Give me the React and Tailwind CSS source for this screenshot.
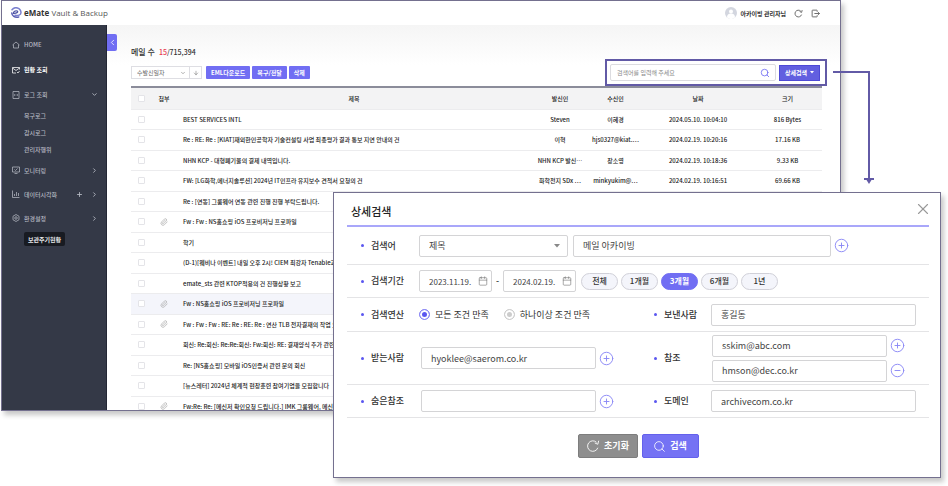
import React from "react";
import {
  ChevronDown,
  ChevronRight,
  ChevronLeft,
  ArrowDown,
  Plus,
  Search,
  Paperclip,
  Calendar,
  CirclePlus,
  CircleMinus,
  X,
} from "lucide-react";

const MAILS = [
  { subject: "BEST SERVICES INTL", from: "Steven", to: "이혜경", date: "2024.05.10. 10:04:10", size: "816 Bytes" },
  { subject: "Re : RE: Re : [KIAT]재외한인공학자 기술컨설팅 사업 최종평가 결과 통보 지연 안내의 건", from: "이혁", to: "hjs0327@kiat.⋯", date: "2024.02.19. 10:20:16", size: "17.16 KB" },
  { subject: "NHN KCP - 대형폐기물의 결제 내역입니다.", from: "NHN KCP 발신⋯", to: "장소영", date: "2024.02.19. 10:18:36", size: "9.33 KB" },
  { subject: "FW: [LG화학,에너지솔루션] 2024년 IT인프라 유지보수 견적서 요청의 건", from: "화학전지 SDx ⋯", to: "minkyukim@⋯", date: "2024.02.19. 10:16:51", size: "69.66 KB" },
  { subject: "Re : [연동] 그룹웨어 연동 관련 진행 진행 부탁드립니다." },
  { subject: "Fw : Fw : NS홈쇼핑 iOS 프로비저닝 프로파일", clip: true },
  { subject: "학기" },
  { subject: "(D-1)[웨비나 이벤트] 내일 오후 2시! CIEM 최강자 Tenable과 함께" },
  { subject: "emate_sts 관련 KTOP적용의 건 진행상황 보고" },
  { subject: "Fw : NS홈쇼핑 iOS 프로비저닝 프로파일", clip: true, active: true },
  { subject: "Fw : Fw : Fw : RE: Re : RE: Re : 연산 TLB 전자결재의 작업 요청", clip: true },
  { subject: "회신: Re:회신: Re:Re:회신: Fw:회신: RE: 결재양식 추가 관련" },
  { subject: "Re: [NS홈쇼핑] 모바일 iOS인증서 관련 문의 회신" },
  { subject: "[뉴스레터] 2024년 체계적 현장훈련 참여기업을 모집합니다" },
  { subject: "Fw:Re: Re: [메신저 확인요청 드립니다.] IMK 그룹웨어, 메신저", clip: true },
];

const PERIODS = [
  { label: "전체" },
  { label: "1개월" },
  { label: "3개월", active: true },
  { label: "6개월" },
  { label: "1년" },
];

const FIELD =
  "h-[22px] rounded-[2px] border border-[#d4d4d6] bg-white px-[9px] leading-none text-[#444] outline-none";

const ICONS = {
  home: "M1 8L8 2L15 8M3 7V14H13V7",
  mail: "M15 7V3H1V14H8M1 4L8 9L15 4M10 12L12 14L15 10",
  log: "M2 1H14V15H2ZM6.5 6L4.500 8L6.500 10M9.500 6L11.500 8L9.500 10",
  monitor: "M1 2H15V12H1ZM5 15H11M5 7L7 9L11 5",
  chart: "M1 1V15H15M5 12V8M9 12V4M13 12V6",
  gear: "M8 1L14 4.500V11.500L8 15L2 11.500V4.500ZM8 5.500A2.500 2.500 0 1 0 8 10.500A2.500 2.500 0 1 0 8 5.500",
  refresh: "M13.500 10A6 6 0 1 1 12 3.800M14.500 2L13.500 6L10 4.500",
  logout: "M11 5V3Q11 2 10 2H3Q2 2 2 3V13Q2 14 3 14H10Q11 14 11 13V11M6 8H15M12.500 5.500L15 8L12.500 10.500",
};

function Glyph({ name, className, weight = 1.5 }) {
  return (
    <svg viewBox="0 0 16 16" className={className} fill="none" stroke="currentColor" strokeWidth={weight}>
      <path d={ICONS[name]} />
    </svg>
  );
}

function Logo() {
  return (
    <svg viewBox="0 0 24 24" className="size-[12px]" fill="none" strokeLinecap="round">
      <path d="M4 5.500A10 10 0 0 1 22 11C22 16 16 18 10 16.500" stroke="#7b80cf" strokeWidth="3" />
      <path d="M6.500 13C6.500 9 11 6.500 14.500 8C17 9.500 14 12.500 8 12.500" stroke="#4f55a4" strokeWidth="2.500" />
      <path d="M3.500 12C4 18 9 21.500 17.500 20" stroke="#5a5fb5" strokeWidth="3" />
    </svg>
  );
}

function NavItem({ icon, label, strong, tall, plus, arrow: Arrow }) {
  return (
    <li>
      <a
        href="#"
        className={`flex items-center gap-1 pl-[10px] pr-[8px] ${tall ? "h-[25px]" : "h-[24px]"} ${
          strong ? "font-bold text-white" : "font-medium text-[#b4b8c1]"
        }`}
      >
        <Glyph name={icon} className="size-[8px]" />
        <span className="flex-1">{label}</span>
        {plus && <Plus className="mr-1 size-[7px]" strokeWidth={3} />}
        {Arrow && <Arrow className="size-[7px]" strokeWidth={3} />}
      </a>
    </li>
  );
}

function Sidebar() {
  return (
    <nav className="w-[105px] shrink-0 border-r border-[#232735] bg-[#343947] pt-[7px] text-[6px]">
      <ul>
        <NavItem tall icon="home" label="HOME" />
        <NavItem tall strong icon="mail" label="현황 조회" />
        <NavItem tall icon="log" label="로그 조회" arrow={ChevronDown} />
        {["복구로그", "감시로그", "관리자행위"].map((t) => (
          <li key={t}>
            <a href="#" className="flex h-[17px] items-center pl-[22px] font-medium text-[#b4b8c1]">
              {t}
            </a>
          </li>
        ))}
        <NavItem icon="monitor" label="모니터링" arrow={ChevronRight} />
        <NavItem icon="chart" label="데이터시각화" plus arrow={ChevronRight} />
        <NavItem icon="gear" label="환경설정" arrow={ChevronRight} />
      </ul>
      <button className="ml-[22px] mt-[2px] h-[14px] rounded-[2px] bg-[#181b22] px-1 font-bold text-[#e6e7ea]">
        보관주기현황
      </button>
    </nav>
  );
}

function Check({ label }) {
  return (
    <input
      type="checkbox"
      aria-label={label}
      className="mx-auto block size-[7px] appearance-none rounded-[1px] border border-[#e4e4e8] bg-white"
    />
  );
}

function Toolbar() {
  const action = "h-[13px] rounded-[1px] bg-[#716ef3] px-[5px] font-bold text-white";
  return (
    <div className="-mr-[5px] flex items-center justify-between text-[6px]">
      <div className="flex items-center gap-[2px]">
        <div className="mr-[2px] flex h-[13px] border border-[#dedee3] bg-white text-[#666]">
          <div className="relative">
            <select aria-label="정렬 기준" className="h-full w-[57px] appearance-none bg-transparent pl-[5px]">
              <option>수발신일자</option>
            </select>
            <ChevronDown className="pointer-events-none absolute right-[3px] top-[3px] size-[6px]" />
          </div>
          <button aria-label="내림차순" className="flex w-[12px] items-center justify-center border-l border-[#dedee3]">
            <ArrowDown className="size-[6px]" />
          </button>
        </div>
        <button className={action}>EML다운로드</button>
        <button className={action}>복구/전달</button>
        <button className={action}>삭제</button>
      </div>
      <div className="flex h-[27px] w-[222px] items-center gap-[3px] border-2 border-[#625aa6] bg-white pl-[3px] pr-[5px]">
        <div className="flex h-[17px] flex-1 items-center rounded-[2px] border border-[#dcdce0] pl-[6px] pr-[5px]">
          <input
            aria-label="검색어"
            placeholder="검색어를 입력해 주세요"
            className="min-w-0 flex-1 outline-none placeholder:text-[#888]"
          />
          <Search className="size-[10px] text-[#716ef3]" strokeWidth={2} />
        </div>
        <button className="flex h-[16px] w-[41px] items-center justify-center gap-[3px] border border-[#4d49d6] bg-[#625fe0] font-bold text-white">
          상세검색
          <svg viewBox="0 0 4 3" className="h-[3px] w-[4px]">
            <path d="M0 0H4L2 2.500Z" fill="currentColor" />
          </svg>
        </button>
      </div>
    </div>
  );
}

function MailTable() {
  return (
    <table className="h-[331px] w-full table-fixed border-t-2 border-[#8b8c9a] text-center text-[6px] text-[#222]">
      <colgroup>
        <col className="w-[21px]" />
        <col className="w-[24px]" />
        <col />
        <col className="w-[56px]" />
        <col className="w-[55px]" />
        <col className="w-[110px]" />
        <col className="w-[69px]" />
      </colgroup>
      <thead className="bg-[#f3f3f4]">
        <tr className="h-[22px] border-b border-[#ececee]">
          <th><Check label="전체 선택" /></th>
          {["첨부", "제목", "발신인", "수신인", "날짜", "크기"].map((h) => (
            <th key={h} className="font-medium">{h}</th>
          ))}
        </tr>
      </thead>
      <tbody>
        {MAILS.map((m, i) => (
          <tr key={i} className={`h-[20px] border-b border-[#ececee] font-medium ${m.active ? "bg-[#f4f5fb]" : ""}`}>
            <td><Check label={m.subject} /></td>
            <td>{m.clip && <Paperclip className="mx-auto size-[8px] text-[#aaa]" strokeWidth={2} />}</td>
            <td className="overflow-hidden whitespace-nowrap pl-[7px] text-left">{m.subject}</td>
            <td className="whitespace-nowrap">{m.from}</td>
            <td className="whitespace-nowrap">{m.to}</td>
            <td className="whitespace-nowrap">{m.date}</td>
            <td className="whitespace-nowrap">{m.size}</td>
          </tr>
        ))}
      </tbody>
    </table>
  );
}

function Label({ htmlFor, children, className }) {
  return (
    <label
      htmlFor={htmlFor}
      className={`flex shrink-0 items-center gap-[7px] whitespace-nowrap font-medium text-[#333] ${className}`}
    >
      <span className="size-[3px] rounded-full bg-[#5b57f0]" />
      {children}
    </label>
  );
}

function IconButton({ icon: Icon, label }) {
  return (
    <button type="button" aria-label={label} className="ml-[3px] block shrink-0 text-[#8a87f5]">
      <Icon className="size-[15px]" strokeWidth={1.5} />
    </button>
  );
}

function Radio({ id, label, checked }) {
  return (
    <label htmlFor={id} className="flex items-center gap-[5px] whitespace-nowrap text-[#333]">
      <input
        id={id}
        type="radio"
        name="op"
        defaultChecked={checked}
        className="size-[11px] appearance-none rounded-full border border-[#ccc] bg-[#ccc] shadow-[inset_0_0_0_2px_white] checked:border-[#8a87f5] checked:bg-[#5b57f0]"
      />
      {label}
    </label>
  );
}

function DateField({ id, label, value }) {
  return (
    <div className={`flex w-[73px] items-center text-[8px] ${FIELD}`}>
      <input id={id} aria-label={label} defaultValue={value} className="w-0 flex-1 outline-none" />
      <Calendar className="-mr-[6px] size-[10px] shrink-0 text-[#777]" strokeWidth={1.5} />
    </div>
  );
}

function SearchDialog() {
  const row = "flex items-center border-b border-[#e4e4e6] pl-[14px]";
  const left = "flex w-[293px] shrink-0 items-center";
  const right = "flex flex-1 items-center";
  return (
    <section
      role="dialog"
      aria-label="상세검색"
      className="absolute left-[333px] right-[7px] top-[192px] border border-[#74708f] bg-white pb-[19px] pl-[13px] pr-[11px] text-[9px] shadow-[3px_4px_5px_rgba(0,0,0,0.22)]"
    >
      <header className="flex h-[34px] items-center justify-between border-b-2 border-[#a9a7fa] pl-1">
        <h2 className="pt-[5px] text-[11px] font-medium text-[#222]">상세검색</h2>
        <button aria-label="닫기" className="-mr-[3px] text-[#999]">
          <X className="size-[18px]" strokeWidth={1.5} />
        </button>
      </header>
      <form>
        <div className={`h-[38px] ${row}`}>
          <Label htmlFor="kw" className="w-[58px]">검색어</Label>
          <div className="relative mr-[5px]">
            <select id="kw" className={`w-[149px] appearance-none ${FIELD}`}>
              <option>제목</option>
            </select>
            <svg viewBox="0 0 6 4" className="pointer-events-none absolute right-[8px] top-[9px] h-[4px] w-[6px]">
              <path d="M0 0H6L3 3.500Z" fill="#888" />
            </svg>
          </div>
          <input aria-label="검색어 입력" defaultValue="메일 아카이빙" className={`min-w-0 flex-1 ${FIELD}`} />
          <div className="mr-[80px]">
            <IconButton icon={CirclePlus} label="검색어 추가" />
          </div>
        </div>
        <div className={`h-[33px] ${row}`}>
          <Label htmlFor="from" className="w-[58px]">검색기간</Label>
          <DateField id="from" label="검색기간 시작" value="2023.11.19." />
          <span className="w-[11px] text-center">-</span>
          <DateField id="to" label="검색기간 끝" value="2024.02.19." />
          <div className="ml-[5px] flex gap-[3px]">
            {PERIODS.map((p) => (
              <button
                key={p.label}
                type="button"
                className={`h-[17px] w-[37px] rounded-full border text-[8px] ${
                  p.active
                    ? "border-[#716ef3] bg-[#716ef3] font-bold text-white"
                    : "border-[#d0d0d8] bg-[#f4f5fb] font-medium text-[#333]"
                }`}
              >
                {p.label}
              </button>
            ))}
          </div>
        </div>
        <div className={`h-[34px] ${row}`}>
          <div className={left}>
            <Label htmlFor="op-all" className="w-[58px]">검색연산</Label>
            <div className="flex gap-[15px]">
              <Radio id="op-all" label="모든 조건 만족" checked />
              <Radio id="op-any" label="하나이상 조건 만족" />
            </div>
          </div>
          <div className={right}>
            <Label htmlFor="sender" className="w-[57px]">보낸사람</Label>
            <input id="sender" defaultValue="홍길동" className={`mr-[13px] w-0 flex-1 ${FIELD}`} />
          </div>
        </div>
        <div className={`h-[53px] ${row}`}>
          <div className={left}>
            <Label htmlFor="rcpt" className="w-[60px]">받는사람</Label>
            <input id="rcpt" defaultValue="hyoklee@saerom.co.kr" className={`w-[175px] ${FIELD}`} />
            <IconButton icon={CirclePlus} label="받는사람 추가" />
          </div>
          <div className={right}>
            <Label htmlFor="cc1" className="w-[58px]">참조</Label>
            <div className="flex flex-col gap-[3px]">
              <div className="flex items-center">
                <input id="cc1" defaultValue="sskim@abc.com" className={`w-[175px] ${FIELD}`} />
                <IconButton icon={CirclePlus} label="참조 추가" />
              </div>
              <div className="flex items-center">
                <input aria-label="참조 2" defaultValue="hmson@dec.co.kr" className={`w-[175px] ${FIELD}`} />
                <IconButton icon={CircleMinus} label="참조 삭제" />
              </div>
            </div>
          </div>
        </div>
        <div className={`h-[33px] ${row}`}>
          <div className={left}>
            <Label htmlFor="bcc" className="w-[60px]">숨은참조</Label>
            <input id="bcc" className={`w-[175px] ${FIELD}`} />
            <IconButton icon={CirclePlus} label="숨은참조 추가" />
          </div>
          <div className={right}>
            <Label htmlFor="domain" className="w-[57px]">도메인</Label>
            <input id="domain" defaultValue="archivecom.co.kr" className={`mr-[13px] w-0 flex-1 ${FIELD}`} />
          </div>
        </div>
        <div className="mt-4 flex justify-center gap-1 text-[9px] font-bold text-white">
          <button type="button" className="flex h-[24px] w-[60px] items-center justify-center gap-1 rounded-[2px] border border-[#7d7d7d] bg-[#8e8e8e]">
            <Glyph name="refresh" weight={1} className="size-[14px]" />
            초기화
          </button>
          <button type="button" className="flex h-[24px] w-[57px] items-center justify-center gap-1 rounded-[2px] border border-[#6461ec] bg-[#7572f4]">
            <Search className="size-[13px]" strokeWidth={1.5} />
            검색
          </button>
        </div>
      </form>
    </section>
  );
}

export default function App() {
  return (
    <div className="relative h-screen overflow-hidden bg-white pb-[75px] pl-px pr-[107px] font-['Noto_Sans_CJK_KR','Noto_Sans',sans-serif]">
      <div className="flex h-full flex-col overflow-hidden border border-[#74708f] bg-white shadow-[3px_4px_5px_rgba(0,0,0,0.22)]">
        <header className="flex h-[24px] shrink-0 items-center justify-between pl-[8px] pr-[20px]">
          <div className="flex items-center gap-[2px] font-['Open_Sans','Noto_Sans',sans-serif] text-[8px] text-[#555]">
            <Logo />
            <span>
              <b className="text-[#333]">eMate</b> Vault &amp; Backup
            </span>
          </div>
          <div className="flex items-center gap-[8px] text-[6px] text-[#333]">
            <div className="flex items-center gap-[3px] font-bold">
              <svg viewBox="0 0 12 12" className="size-[12px]">
                <circle cx="6" cy="6" r="6" fill="#d3d6df" />
                <circle cx="6" cy="4.500" r="2" fill="#fff" />
                <path d="M2 10.500A4 4 0 0 1 10 10.500A6 6 0 0 1 2 10.500Z" fill="#fff" />
              </svg>
              아카이빙 관리자님
            </div>
            <button aria-label="새로고침"><Glyph name="refresh" className="size-[9px] text-[#555]" /></button>
            <button aria-label="로그아웃"><Glyph name="logout" className="size-[9px] text-[#555]" /></button>
          </div>
        </header>
        <div className="flex min-h-0 flex-1">
          <Sidebar />
          <main className="relative min-w-0 flex-1 bg-linear-to-b from-[#f5f5f5] to-white to-[40px] pl-[24px] pr-[18px] pt-[20px]">
            <button
              aria-label="메뉴 접기"
              className="absolute left-0 top-[9px] flex h-[17px] w-[10px] items-center justify-center rounded-r-[2px] bg-[#716ef3] text-white"
            >
              <ChevronLeft className="size-[9px]" strokeWidth={2} />
            </button>
            <h1 className="flex h-[14px] items-center gap-1 text-[8px] font-medium text-[#333]">
              메일 수
              <span className="text-[7px]">
                <span className="text-[#e8384f]">15</span>/715,394
              </span>
            </h1>
            <Toolbar />
            <MailTable />
          </main>
        </div>
      </div>
      <svg viewBox="0 0 42 116" className="absolute left-[833px] top-[70px] h-[116px] w-[42px]" fill="none">
        <path d="M0 2H36V110" stroke="#625aa6" strokeWidth="2" />
        <path d="M31 108H41V110H38.500L36 114L33.500 110H31Z" fill="#625aa6" />
      </svg>
      <SearchDialog />
    </div>
  );
}
